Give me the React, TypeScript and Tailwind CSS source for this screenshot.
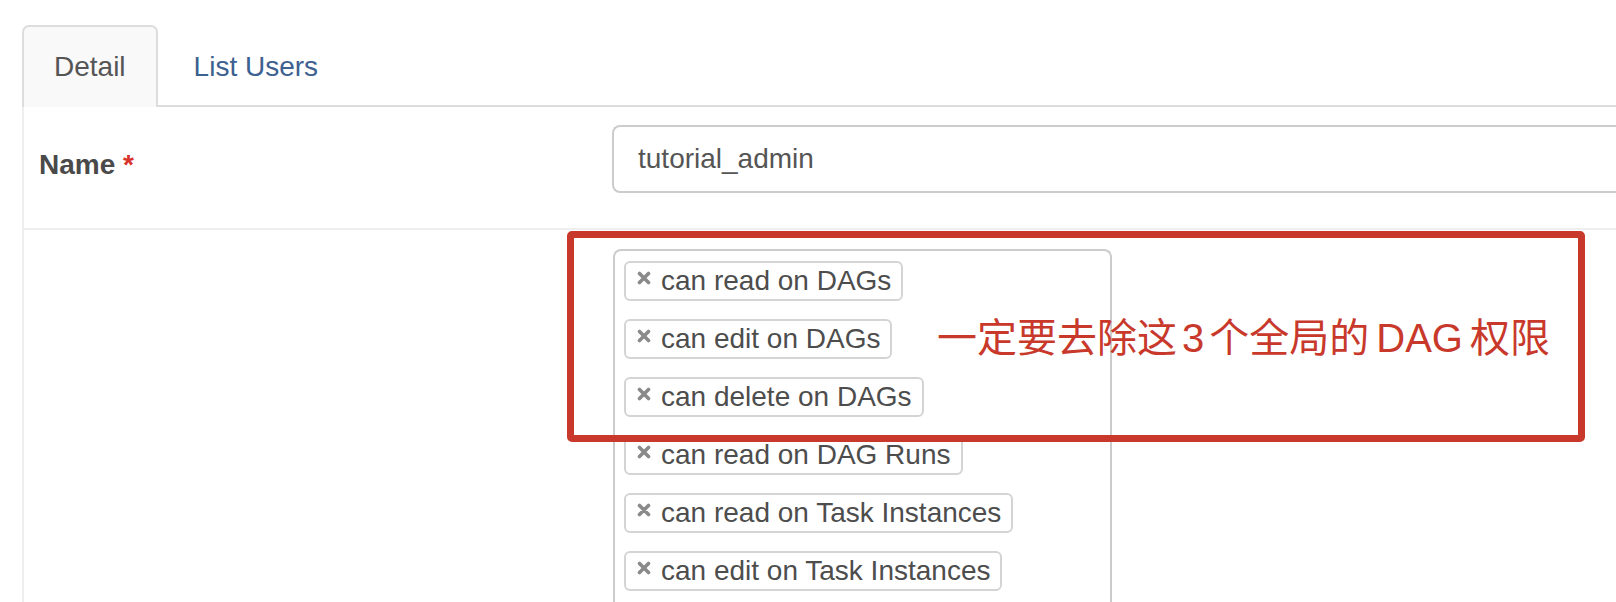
const tags = [
  "can read on DAGs",
  "can edit on DAGs",
  "can delete on DAGs",
  "can read on DAG Runs",
  "can read on Task Instances",
  "can edit on Task Instances",
];

function RemoveMark() {
  return (
    <svg viewBox="0 0 14 14" className="h-[14px] w-[14px] -mt-[7px] shrink-0 text-[#8a8a8a]">
      <path d="M2.5 2.5l9 9M11.5 2.5l-9 9" stroke="currentColor" strokeWidth="3.6" strokeLinecap="round" />
    </svg>
  );
}

export default function App() {
  return (
    <div className="relative h-[602px] overflow-hidden bg-white pt-[25px] pl-[22px] font-['Liberation_Sans',Arial,sans-serif] text-[#555]">
      {/* tabs */}
      <div className="flex h-[82px] border-b-2 border-[#dcdcdc]">
        <div className="-mb-[2px] flex h-[82px] items-start rounded-t-[7px] border-2 border-b-0 border-[#ddd] bg-[#f9f9f9] px-[30px] pt-[20px] text-[28px] leading-[40px] text-[#555]">
          Detail
        </div>
        <div className="ml-[4px] flex h-[80px] items-start px-[32px] pt-[22px] text-[28px] leading-[40px] text-[#3d6190]">
          List Users
        </div>
      </div>

      {/* form table */}
      <div className="border-l-2 border-[#eee]">
        <div className="grid h-[123px] grid-cols-[588px_1fr] border-b-2 border-[#eee]">
          <div className="pl-[15px] pt-[38px] text-[28px] font-bold leading-[40px] text-[#4a4a4a]">
            Name <span className="text-[#d9342b]">*</span>
          </div>
          <div className="pt-[18px]">
            <div className="flex h-[68px] items-center rounded-l-[8px] border-2 border-r-0 border-[#ccc] pl-[24px] text-[28px] text-[#555]">
              tutorial_admin
            </div>
          </div>
        </div>
        <div className="grid grid-cols-[589px_1fr] pt-[19px]">
          <div />
          <div className="h-[420px] w-[499px] rounded-t-[8px] border-2 border-b-0 border-[#ccc] pl-[9px] pt-[10px]">
            <div className="flex flex-col items-start gap-[18px]">
              {tags.map((t) => (
                <div
                  key={t}
                  className="flex h-[40px] items-center gap-[10px] rounded-[6px] border-2 border-[#d4d4d4] bg-white pl-[11px] pr-[10px] text-[28px] leading-none text-[#4d4d4d]"
                >
                  <RemoveMark />
                  <span>{t}</span>
                </div>
              ))}
            </div>
          </div>
        </div>
      </div>

      {/* annotation */}
      <div className="absolute left-[567px] top-[231px] h-[211px] w-[1018px] rounded-[5px] border-[7px] border-[#c8392b]" />
      <div className="absolute left-[937px] top-[318px] whitespace-nowrap font-['Liberation_Sans','Noto_Sans_CJK_SC',sans-serif] text-[40px] leading-none text-[#c8392b]">
        一定要去除这<span className="mx-[5px]">3</span>个全局的<span className="mx-[7px]">DAG</span>权限
      </div>
    </div>
  );
}
